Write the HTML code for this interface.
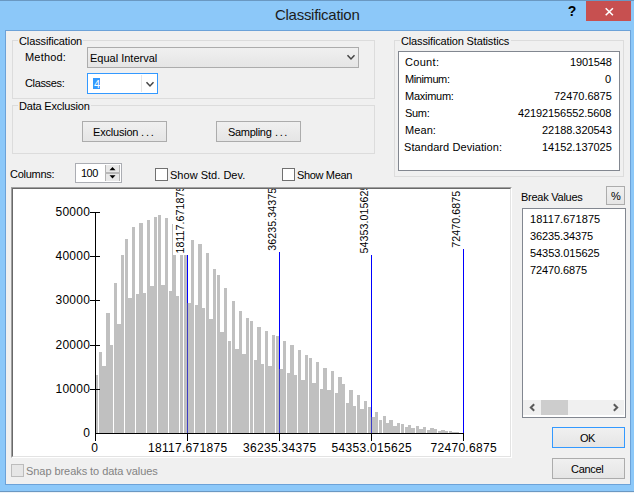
<!DOCTYPE html>
<html><head><meta charset="utf-8"><title>Classification</title>
<style>
*{box-sizing:border-box;margin:0;padding:0}
html,body{width:634px;height:493px;overflow:hidden}
body{background:#8cc8f9;font-family:"Liberation Sans",sans-serif;font-size:11px;color:#000;position:relative}
.abs,.t{position:absolute}
.t{white-space:nowrap;line-height:13px;height:13px}
#frameline{position:absolute;left:0;top:0;width:634px;height:493px;border-top:1px solid #6a98c2;border-bottom:1px solid #eef2f6}
#frameline:after{content:"";position:absolute;left:0;bottom:0;width:634px;height:1px;background:#6a98c2}
#client{position:absolute;left:5px;top:30px;width:626px;height:455px;background:#f0f0f0;border:1px solid #6ca2d8}
#title{position:absolute;left:0;top:5px;width:634px;text-align:center;font-size:15px;line-height:20px;letter-spacing:0}
#help{position:absolute;left:567px;top:2px;font-size:14px;font-weight:bold;line-height:18px;width:10px;text-align:center}
#close{position:absolute;left:586px;top:1px;width:45px;height:20px;background:#c75050}
.gb{position:absolute;border:1px solid #dcdcdc}
.gbl{position:absolute;background:#f0f0f0;padding:0 2px;line-height:13px;white-space:nowrap}
.btn{position:absolute;border:1px solid #acacac;background:linear-gradient(#f0f0f0,#e5e5e5);text-align:center;white-space:nowrap}
.sunk{position:absolute;background:#fff;border:1px solid;border-color:#a0a0a0 #fff #fff #a0a0a0}
.sunk>i{position:absolute;left:0;top:0;right:0;bottom:0;border:1px solid;border-color:#696969 #e3e3e3 #e3e3e3 #696969}
.cb{position:absolute;width:13px;height:13px;border:1px solid #707070;background:#fff}
.chart{position:absolute;left:1px;top:1px}
</style></head><body>
<div id="frameline"></div>
<div id="help">?</div>
<div id="close"><svg width="45" height="20" viewBox="0 0 45 20"><path d="M19.7 7.3l7.2 7M26.9 7.3l-7.2 7" stroke="#fff" stroke-width="1.6" fill="none"/></svg></div>
<div id="client"></div>

<!-- group: Classification -->
<div class="gb" style="left:12px;top:40px;width:363px;height:59px"></div>
<div class="abs" id="cmb1" style="left:87px;top:47px;width:272px;height:21px;border:1px solid #acacac;background:linear-gradient(#f0f0f0,#e5e5e5)"></div>
<svg class="abs" style="left:346px;top:54px" width="10" height="8" viewBox="0 0 10 8"><path d="M1.5 1.2l3.5 3.8l3.5-3.8" stroke="#444" stroke-width="1.5" fill="none"/></svg>
<div class="abs" id="cmb2" style="left:87px;top:73px;width:71px;height:21px;border:1px solid #3399ff;background:#fff"></div>
<div class="abs" style="left:93px;top:78px;width:7px;height:11px;background:#3399ff"></div>
<div class="abs" style="left:141px;top:75px;width:1px;height:17px;background:#e6e6e6"></div>
<svg class="abs" style="left:145px;top:81px" width="10" height="8" viewBox="0 0 10 8"><path d="M1.5 1.2l3.5 3.8l3.5-3.8" stroke="#444" stroke-width="1.5" fill="none"/></svg>

<!-- group: Data Exclusion -->
<div class="gb" style="left:12px;top:105px;width:363px;height:49px"></div>
<div class="btn" style="left:82px;top:121px;width:85px;height:21px;line-height:19px"></div>
<div class="btn" style="left:216px;top:121px;width:85px;height:21px;line-height:19px"></div>

<!-- group: stats -->
<div class="gb" style="left:394px;top:40px;width:230px;height:137px"></div>
<div class="abs" style="left:398px;top:51px;width:222px;height:120px;border:1px solid #828790;background:#fff"></div>

<!-- columns row -->
<div class="abs" style="left:75px;top:163px;width:47px;height:20px;border:1px solid #abadb3;background:#fff"></div>
<div class="abs" id="spin" style="left:105px;top:165px;width:15px;height:16px;background:#e9e9e9;border-left:1px solid #b4b4b4;border-right:1px solid #b4b4b4"></div>
<div class="abs" style="left:105px;top:172px;width:15px;height:2px;background:#b8b8b8"></div>
<svg class="abs" style="left:109px;top:166px" width="8" height="14" viewBox="0 0 8 14"><path d="M0.5 4.2L3.5 1L6.5 4.2Z M0.5 9.3L3.5 12.5L6.5 9.3Z" fill="#000"/></svg>
<div class="cb" style="left:155px;top:168px"></div>
<div class="cb" style="left:282px;top:168px"></div>

<!-- histogram frame -->
<div class="sunk" style="left:11px;top:187px;width:501px;height:271px"><i></i>
<svg class="chart" width="498" height="267" viewBox="13 189 498 267" shape-rendering="crispEdges">
<path d="M95 375H99V433H95ZM99 352H102V433H99ZM102 366H106V433H102ZM106 313H110V433H106ZM110 345H113V433H110ZM113 283H117V433H113ZM117 324H121V433H117ZM121 255H124V433H121ZM124 239H128V433H124ZM128 298H132V433H128ZM132 227H135V433H132ZM135 294H139V433H135ZM139 223H143V433H139ZM143 293H147V433H143ZM147 220H150V433H147ZM150 286H154V433H150ZM154 217H158V433H154ZM158 215H161V433H158ZM161 285H165V433H161ZM165 218H169V433H165ZM169 291H172V433H169ZM172 224H176V433H172ZM176 296H180V433H176ZM180 230H183V433H180ZM183 234H187V433H183ZM187 303H191V433H187ZM191 240H194V433H191ZM194 305H198V433H194ZM198 244H202V433H198ZM202 308H205V433H202ZM205 253H209V433H205ZM209 319H213V433H209ZM213 269H216V433H213ZM216 275H220V433H216ZM220 332H224V433H220ZM224 288H227V433H224ZM227 341H231V433H227ZM231 301H235V433H231ZM235 349H239V433H235ZM239 311H242V433H239ZM242 354H246V433H242ZM246 318H250V433H246ZM250 321H253V433H250ZM253 360H257V433H253ZM257 327H261V433H257ZM261 364H264V433H261ZM264 331H268V433H264ZM268 366H272V433H268ZM272 335H275V433H272ZM275 336H279V433H275ZM279 369H283V433H279ZM283 341H286V433H283ZM286 373H290V433H286ZM290 345H294V433H290ZM294 375H297V433H294ZM297 350H301V433H297ZM301 380H305V433H301ZM305 355H308V433H305ZM308 358H312V433H308ZM312 383H316V433H312ZM316 362H319V433H316ZM319 389H323V433H319ZM323 368H327V433H323ZM327 390H331V433H327ZM331 371H334V433H331ZM334 393H338V433H334ZM338 377H342V433H338ZM342 384H345V433H342ZM345 403H349V433H345ZM349 390H353V433H349ZM353 406H356V433H353ZM356 395H360V433H356ZM360 409H364V433H360ZM364 401H367V433H364ZM367 407H371V433H367ZM371 417H375V433H371ZM375 412H378V433H375ZM378 420H382V433H378ZM382 416H386V433H382ZM386 423H389V433H386ZM389 420H393V433H389ZM393 426H397V433H393ZM397 423H400V433H397ZM400 424H404V433H400ZM404 427H408V433H404ZM408 425H411V433H408ZM411 428H415V433H411ZM415 426H419V433H415ZM419 429H423V433H419ZM423 427H426V433H423ZM426 430H430V433H426ZM430 428H434V433H430ZM434 429H437V433H434ZM437 431H441V433H437ZM441 430H445V433H441ZM445 431H448V433H445ZM448 431H452V433H448ZM452 432H456V433H452ZM456 432H459V433H456Z" fill="#c0c0c0"/>
<path d="M98 189h1v244h-1zM113 189h1v244h-1zM124 189h1v244h-1zM135 189h1v244h-1zM146 189h1v244h-1zM157 189h1v244h-1zM168 189h1v244h-1zM179 189h1v244h-1zM183 189h1v244h-1zM194 189h1v244h-1zM205 189h1v244h-1zM216 189h1v244h-1zM227 189h1v244h-1zM231 189h1v244h-1zM249 189h1v244h-1zM253 189h1v244h-1zM264 189h1v244h-1zM275 189h1v244h-1zM286 189h1v244h-1zM297 189h1v244h-1zM308 189h1v244h-1zM319 189h1v244h-1zM334 189h1v244h-1zM345 189h1v244h-1zM356 189h1v244h-1zM367 189h1v244h-1zM378 189h1v244h-1zM382 189h1v244h-1zM400 189h1v244h-1zM404 189h1v244h-1zM415 189h1v244h-1zM426 189h1v244h-1zM437 189h1v244h-1zM448 189h1v244h-1z" fill="#fff"/>
<path d="M95 212h1v221h-1z M95 433h369v1h-369z" fill="#000"/>
<path d="M90 389h10v1h-10zM90 345h10v1h-10zM90 300h10v1h-10zM90 256h10v1h-10zM90 212h10v1h-10z" fill="#000"/>
<path d="M95 433h1v8h-1zM187 433h1v8h-1zM279 433h1v8h-1zM371 433h1v8h-1zM463 433h1v8h-1z" fill="#000"/>
<rect x="173" y="185" width="14" height="70" fill="#fff"/>
<rect x="187" y="255" width="1" height="178" fill="#0000ff"/>
<rect x="265" y="188" width="14" height="64" fill="#fff"/>
<rect x="279" y="252" width="1" height="181" fill="#0000ff"/>
<rect x="357" y="185" width="14" height="70" fill="#fff"/>
<rect x="371" y="255" width="1" height="178" fill="#0000ff"/>
<rect x="449" y="191" width="14" height="58" fill="#fff"/>
<rect x="463" y="249" width="1" height="184" fill="#0000ff"/>
<rect x="187" y="303" width="1" height="130" fill="#3c3cc4"/>
<rect x="279" y="369" width="1" height="64" fill="#3c3cc4"/>
<rect x="371" y="417" width="1" height="16" fill="#3c3cc4"/>
<g font-family="Liberation Sans, sans-serif" font-size="12" fill="#000" letter-spacing="0.3">
<text x="90.3" y="436.7" text-anchor="end">0</text>
<text x="90.3" y="392.7" text-anchor="end">10000</text>
<text x="90.3" y="348.7" text-anchor="end">20000</text>
<text x="90.3" y="303.7" text-anchor="end">30000</text>
<text x="90.3" y="259.7" text-anchor="end">40000</text>
<text x="90.3" y="215.7" text-anchor="end">50000</text>
<text x="94.7" y="452" text-anchor="middle">0</text>
<text x="187.7" y="452" text-anchor="middle">18117.671875</text>
<text x="279.7" y="452" text-anchor="middle">36235.34375</text>
<text x="371.7" y="452" text-anchor="middle">54353.015625</text>
<text x="463.7" y="452" text-anchor="middle">72470.6875</text>
<text font-size="10.67" letter-spacing="0.07" transform="translate(184,253.6) rotate(-90)">18117.671875</text>
<text font-size="10.67" letter-spacing="0.07" transform="translate(276,250.7) rotate(-90)">36235.34375</text>
<text font-size="10.67" letter-spacing="0.07" transform="translate(368,253.6) rotate(-90)">54353.015625</text>
<text font-size="10.67" letter-spacing="0.07" transform="translate(460,247.7) rotate(-90)">72470.6875</text>
</g>
</svg>
</div>

<!-- break values -->
<div class="btn" style="left:606px;top:186px;width:19px;height:19px;line-height:17px"></div>
<div class="abs" id="list" style="left:522px;top:208px;width:104px;height:210px;border:1px solid #828790;background:#fff"></div>
<div class="abs" style="left:523px;top:400px;width:101px;height:15px;background:#f0f0f0"></div>
<div class="abs" style="left:541px;top:400px;width:27px;height:15px;background:#cdcdcd"></div>
<svg class="abs" style="left:528px;top:403px" width="8" height="9" viewBox="0 0 8 9"><path d="M6.2 1.2l-3.4 3.3l3.4 3.3" stroke="#5a5a5a" stroke-width="2" fill="none"/></svg>
<svg class="abs" style="left:612px;top:403px" width="8" height="9" viewBox="0 0 8 9"><path d="M1.8 1.2l3.4 3.3l-3.4 3.3" stroke="#5a5a5a" stroke-width="2" fill="none"/></svg>

<!-- ok / cancel -->
<div class="btn" style="left:552px;top:427px;width:73px;height:21px;line-height:19px;border-color:#3399ff"></div>
<div class="btn" style="left:552px;top:458px;width:73px;height:21px;line-height:19px"></div>

<!-- snap -->
<div class="cb" style="left:11px;top:464px;border-color:#bcbcbc;background:#e6e6e6"></div>
<div class="abs" style="left:18px;top:40px;width:65px;height:1px;background:#f0f0f0"></div>
<div class="abs" style="left:18px;top:105px;width:73px;height:1px;background:#f0f0f0"></div>
<div class="abs" style="left:400px;top:40px;width:111px;height:1px;background:#f0f0f0"></div>
<div class="t" style="left:275px;top:6px;font-size:15px;line-height:17px;height:17px;letter-spacing:-0.28px;color:#1c1c1c">Classification</div>
<div class="t" style="left:19px;top:35px;font-size:11px;line-height:13px;height:13px;letter-spacing:-0.12px;color:#000">Classification</div>
<div class="t" style="left:25px;top:51px;font-size:11px;line-height:13px;height:13px;letter-spacing:0.18px;color:#000">Method:</div>
<div class="t" style="left:90px;top:52px;font-size:11px;line-height:13px;height:13px;letter-spacing:0.0px;color:#000">Equal Interval</div>
<div class="t" style="left:25px;top:77px;font-size:11px;line-height:13px;height:13px;letter-spacing:-0.35px;color:#000">Classes:</div>
<div class="t" style="left:94px;top:78px;font-size:11px;line-height:13px;height:13px;letter-spacing:0px;color:#fff">4</div>
<div class="t" style="left:19px;top:100px;font-size:11px;line-height:13px;height:13px;letter-spacing:-0.2px;color:#000">Data Exclusion</div>
<div class="t" style="left:93px;top:126px;font-size:11px;line-height:13px;height:13px;letter-spacing:-0.2px;color:#000">Exclusion</div>
<div class="t" style="left:228px;top:126px;font-size:11px;line-height:13px;height:13px;letter-spacing:-0.3px;color:#000">Sampling</div>
<div class="t" style="left:401px;top:35px;font-size:11px;line-height:13px;height:13px;letter-spacing:-0.15px;color:#000">Classification Statistics</div>
<div class="t" style="left:405px;top:56px;font-size:11px;line-height:13px;height:13px;letter-spacing:0.31px;color:#000">Count:</div>
<div class="t" style="left:405px;top:73px;font-size:11px;line-height:13px;height:13px;letter-spacing:-0.39px;color:#000">Minimum:</div>
<div class="t" style="left:405px;top:90px;font-size:11px;line-height:13px;height:13px;letter-spacing:-0.27px;color:#000">Maximum:</div>
<div class="t" style="left:405px;top:107px;font-size:11px;line-height:13px;height:13px;letter-spacing:-0.3px;color:#000">Sum:</div>
<div class="t" style="left:405px;top:124px;font-size:11px;line-height:13px;height:13px;letter-spacing:0.08px;color:#000">Mean:</div>
<div class="t" style="left:404px;top:141px;font-size:11px;line-height:13px;height:13px;letter-spacing:0.08px;color:#000">Standard Deviation:</div>
<div class="t" style="left:570px;top:56px;font-size:11px;line-height:13px;height:13px;letter-spacing:-0.18px;color:#000">1901548</div>
<div class="t" style="left:605px;top:73px;font-size:11px;line-height:13px;height:13px;letter-spacing:0px;color:#000">0</div>
<div class="t" style="left:554px;top:90px;font-size:11px;line-height:13px;height:13px;letter-spacing:-0.04px;color:#000">72470.6875</div>
<div class="t" style="left:518px;top:107px;font-size:11px;line-height:13px;height:13px;letter-spacing:-0.1px;color:#000">42192156552.5608</div>
<div class="t" style="left:542px;top:124px;font-size:11px;line-height:13px;height:13px;letter-spacing:-0.05px;color:#000">22188.320543</div>
<div class="t" style="left:542px;top:141px;font-size:11px;line-height:13px;height:13px;letter-spacing:-0.05px;color:#000">14152.137025</div>
<div class="t" style="left:10px;top:168px;font-size:11px;line-height:13px;height:13px;letter-spacing:-0.26px;color:#000">Columns:</div>
<div class="t" style="left:81px;top:167px;font-size:11px;line-height:13px;height:13px;letter-spacing:-0.5px;color:#000">100</div>
<div class="t" style="left:170px;top:169px;font-size:11px;line-height:13px;height:13px;letter-spacing:0.02px;color:#000">Show Std. Dev.</div>
<div class="t" style="left:297px;top:169px;font-size:11px;line-height:13px;height:13px;letter-spacing:-0.34px;color:#000">Show Mean</div>
<div class="t" style="left:521px;top:191px;font-size:11px;line-height:13px;height:13px;letter-spacing:-0.25px;color:#000">Break Values</div>
<div class="t" style="left:611px;top:190px;font-size:11px;line-height:13px;height:13px;letter-spacing:0px;color:#000">%</div>
<div class="t" style="left:530px;top:213px;font-size:11px;line-height:13px;height:13px;letter-spacing:0.06px;color:#000">18117.671875</div>
<div class="t" style="left:530px;top:230px;font-size:11px;line-height:13px;height:13px;letter-spacing:-0.1px;color:#000">36235.34375</div>
<div class="t" style="left:530px;top:247px;font-size:11px;line-height:13px;height:13px;letter-spacing:-0.06px;color:#000">54353.015625</div>
<div class="t" style="left:530px;top:264px;font-size:11px;line-height:13px;height:13px;letter-spacing:-0.12px;color:#000">72470.6875</div>
<div class="t" style="left:580px;top:432px;font-size:11px;line-height:13px;height:13px;letter-spacing:-0.44px;color:#000">OK</div>
<div class="t" style="left:571px;top:463px;font-size:11px;line-height:13px;height:13px;letter-spacing:-0.3px;color:#000">Cancel</div>
<div class="t" style="left:26px;top:465px;font-size:11px;line-height:13px;height:13px;letter-spacing:-0.06px;color:#838383">Snap breaks to data values</div>
<div class="t" style="left:141px;top:126px;font-size:11px;line-height:13px;height:13px;letter-spacing:1.84px;color:#000">...</div>
<div class="t" style="left:275px;top:126px;font-size:11px;line-height:13px;height:13px;letter-spacing:1.58px;color:#000">...</div>
</body></html>
